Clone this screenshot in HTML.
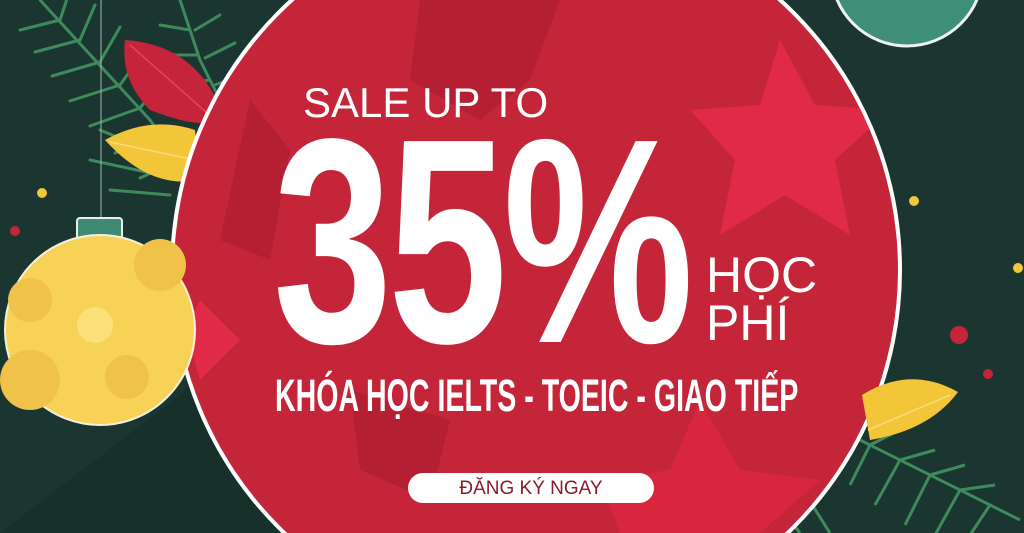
<!DOCTYPE html>
<html><head><meta charset="utf-8"><style>
html,body{margin:0;padding:0;overflow:hidden}
body{width:1024px;height:533px;overflow:hidden;background:#1b3530;position:relative;font-family:"Liberation Sans",sans-serif}
svg{position:absolute;left:0;top:0}
.t{position:absolute;color:#fff;white-space:nowrap;line-height:1}
</style></head><body>
<svg width="1024" height="533" viewBox="0 0 1024 533">
<defs><clipPath id="cc"><circle cx="536" cy="270" r="362"/></clipPath></defs>
<rect width="1024" height="533" fill="#1b3530"/>
<polygon points="0,533 200,380 400,533" fill="#173029"/>
<g stroke="#3f8a5c" stroke-width="3" fill="none" stroke-linecap="round">
<path d="M40 0 L150 120 L200 190"/>
<path d="M60 20 l-40 10 M80 40 l-45 12 M100 62 l-48 14 M120 85 l-50 16 M140 108 l-50 18 M160 135 l-45 18 M180 160 l-40 18"/>
<path d="M60 20 l10 -30 M80 40 l15 -35 M100 62 l20 -35 M120 85 l25 -35 M140 108 l25 -30"/>
<path d="M180 0 L200 60 L240 140"/>
<path d="M190 30 l-30 -5 M198 55 l-35 0 M210 80 l-35 5 M222 105 l-30 8 M195 30 l25 -15 M205 58 l30 -15 M215 85 l30 -12"/>
<path d="M100 130 l60 25 M90 160 l70 15 M110 190 l60 5"/>
</g>
<path d="M125 40 Q200 45 225 120 Q200 130 150 110 Q120 80 125 40Z" fill="#c5243a"/>
<path d="M130 45 L215 120" stroke="#e14a5a" stroke-width="1.5"/>
<path d="M105 140 Q150 115 195 130 L200 180 Q150 190 105 140Z" fill="#f2c638"/>
<path d="M110 142 L195 160" stroke="#f8dc7a" stroke-width="1.5"/>
<circle cx="907" cy="-30" r="76" fill="#3f8e78" stroke="#eef2ee" stroke-width="3"/>
<circle cx="914" cy="201" r="5" fill="#f2c638"/>
<circle cx="1018" cy="268" r="5" fill="#f2c638"/>
<circle cx="959" cy="335" r="9" fill="#c42538"/>
<circle cx="988" cy="374" r="5" fill="#c42538"/>
<g stroke="#3f8a5c" stroke-width="3" fill="none">
<path d="M840 430 L1020 520"/>
<path d="M870 445 l-20 40 M900 460 l-25 45 M930 475 l-25 50 M960 490 l-25 45 M990 505 l-20 30 M870 445 l30 -15 M900 460 l35 -10 M930 475 l35 -10 M960 490 l35 -5"/>
<path d="M760 480 l40 53 M790 470 l40 63"/>
</g>
<circle cx="536" cy="270" r="366" fill="#ffffff"/>
<circle cx="536" cy="270" r="362" fill="#c42538"/>
<g clip-path="url(#cc)">
<polygon points="420,0 560,0 530,80 480,120 410,80" fill="#b51f33"/>
<polygon points="780,40 815,105 890,110 835,160 850,235 785,195 720,235 735,160 690,110 760,105" fill="#e02a47"/>
<polygon points="200,300 240,340 200,380 185,330" fill="#e02a47"/>
<polygon points="700,400 740,470 820,480 760,533 620,533 600,480 670,470" fill="#d8263f"/>
<polygon points="250,100 290,150 270,260 220,240" fill="#b51f33"/>
<polygon points="350,390 450,420 430,500 360,470" fill="#b51f33"/>
</g>
<path d="M862 395 Q910 365 958 392 Q930 430 870 440Z" fill="#f2c638"/>
<path d="M868 430 L950 395" stroke="#f8dc7a" stroke-width="1.5"/>
<line x1="101" y1="0" x2="101" y2="222" stroke="#9dbab0" stroke-width="1"/>
<rect x="77" y="218" width="45" height="26" rx="3" fill="#3f8a72" stroke="#e8efe9" stroke-width="2"/>
<circle cx="100" cy="330" r="95" fill="#f7d257" stroke="#f3f0e0" stroke-width="2"/>
<circle cx="160" cy="265" r="26" fill="#f0c24a"/>
<circle cx="30" cy="300" r="22" fill="#f0c24a"/>
<circle cx="95" cy="325" r="18" fill="#fbe07a"/>
<circle cx="30" cy="380" r="30" fill="#f0c24a"/>
<circle cx="127" cy="377" r="22" fill="#f0c24a"/>
<circle cx="42" cy="193" r="5" fill="#f2c638"/>
<circle cx="15" cy="231" r="5" fill="#c42538"/>
</svg>
<div class="t" style="left:303px;top:82px;font-size:42px">SALE UP TO</div>
<div class="t" style="left:273px;top:95px;font-size:292px;font-weight:bold;transform:scaleX(0.735);transform-origin:0 0;letter-spacing:-6px">35%</div>
<div class="t" style="left:706px;top:250px;font-size:50px">HỌC</div>
<div class="t" style="left:706px;top:298px;font-size:50px">PHÍ</div>
<div class="t" style="left:275px;top:373px;font-size:45px;font-weight:bold;transform:scaleX(0.635);transform-origin:0 0">KHÓA HỌC IELTS - TOEIC - GIAO TIẾP</div>
<div style="position:absolute;left:408px;top:473px;width:246px;height:30px;background:#fff;border-radius:15px;color:#8b1a2a;font-size:19px;line-height:32px;text-align:center">ĐĂNG KÝ NGAY</div>
</body></html>
